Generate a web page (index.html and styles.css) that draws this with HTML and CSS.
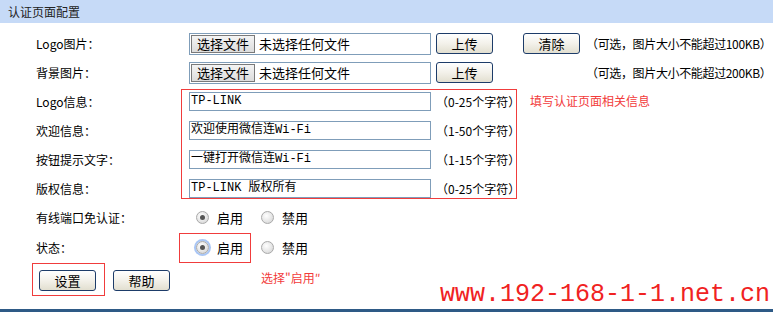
FILE: index.html
```html
<!DOCTYPE html>
<html lang="zh-CN">
<head>
<meta charset="utf-8">
<title>认证页面配置</title>
<link rel="stylesheet" href="styles.css">
</head>
<body>
<div class="page">
  <div class="header">认证页面配置</div>
  <div class="form">
    <div class="row">
      <div class="label">Logo图片：</div>
      <div class="file"><span class="file-btn">选择文件</span><span class="file-text">未选择任何文件</span></div>
      <button class="btn btn-upload">上传</button>
      <div class="slot"><button class="btn">清除</button></div>
      <div class="hint">（可选，图片大小不能超过100KB）</div>
    </div>
    <div class="row">
      <div class="label">背景图片：</div>
      <div class="file"><span class="file-btn">选择文件</span><span class="file-text">未选择任何文件</span></div>
      <button class="btn btn-upload">上传</button>
      <div class="slot"></div>
      <div class="hint">（可选，图片大小不能超过200KB）</div>
    </div>
    <div class="group">
      <div class="row">
        <div class="label">Logo信息：</div>
        <div class="txt">TP-LINK</div>
        <div class="note">（0-25个字符）</div>
      </div>
      <div class="row">
        <div class="label">欢迎信息：</div>
        <div class="txt">欢迎使用微信连Wi-Fi</div>
        <div class="note">（1-50个字符）</div>
      </div>
      <div class="row">
        <div class="label">按钮提示文字：</div>
        <div class="txt">一键打开微信连Wi-Fi</div>
        <div class="note">（1-15个字符）</div>
      </div>
      <div class="row">
        <div class="label">版权信息：</div>
        <div class="txt">TP-LINK 版权所有</div>
        <div class="note">（0-25个字符）</div>
      </div>
      <div class="redbox box-info"></div>
      <div class="tip tip-info">填写认证页面相关信息</div>
    </div>
    <div class="row">
      <div class="label">有线端口免认证：</div>
      <div class="radios">
        <span class="radio on"></span><span class="rlabel">启用</span>
        <span class="radio"></span><span class="rlabel">禁用</span>
      </div>
    </div>
    <div class="row row-status">
      <div class="label">状态：</div>
      <div class="radios">
        <span class="radio on focus"></span><span class="rlabel">启用</span>
        <span class="radio"></span><span class="rlabel">禁用</span>
      </div>
      <div class="redbox box-status"></div>
    </div>
    <div class="actions">
      <button class="btn btn-set">设置</button>
      <button class="btn btn-help">帮助</button>
      <div class="redbox box-set"></div>
      <div class="tip tip-status">选择"启用″</div>
    </div>
  </div>
  <div class="watermark">www.192-168-1-1.net.cn</div>
  <div class="footer-line"></div>
</div>
</body>
</html>
```
FILE: styles.css
```css
html, body {
  margin: 0;
  padding: 0;
  background: #fff;
}
body {
  font-family: "Noto Sans CJK SC", "Liberation Sans", sans-serif;
  font-size: 12px;
  color: #000;
}
.page {
  position: relative;
  width: 773px;
  height: 312px;
  overflow: hidden;
}
.header {
  height: 23px;
  line-height: 23px;
  background: #c6daf7;
  padding-left: 8px;
  font-size: 12px;
  color: #222;
}
.form {
  padding-top: 6px;
  padding-left: 36px;
}
.row {
  position: relative;
  display: flex;
  align-items: center;
  height: 29px;
}
.label {
  width: 153px;
  flex: none;
  font-size: 12px;
}
.file {
  width: 242px;
  height: 22px;
  flex: none;
  box-sizing: border-box;
  border: 1px solid #7f9db9;
  display: flex;
  align-items: center;
  background: #fff;
}
.file-btn {
  margin-left: 1px;
  height: 18px;
  box-sizing: border-box;
  border: 1px solid #7a7a7a;
  background: linear-gradient(#f4f4f4, #dcdcdc);
  padding: 0 5px;
  font-size: 13px;
  line-height: 16px;
  display: flex;
  align-items: center;
}
.file-text {
  margin-left: 4px;
  font-size: 13px;
}
.btn {
  width: 57px;
  height: 21px;
  flex: none;
  box-sizing: border-box;
  border: 1px solid #1d3c69;
  border-radius: 3px;
  background: linear-gradient(#ffffff 0%, #f3f1ea 50%, #e2dfd0 100%);
  font-family: "Noto Sans CJK SC", sans-serif;
  font-size: 13px;
  line-height: 17px;
  padding: 0;
  color: #000;
}
.btn-upload {
  margin-left: 5px;
}
.slot {
  width: 94px;
  flex: none;
  display: flex;
}
.slot .btn {
  margin-left: 30px;
}
.hint {
  font-size: 12px;
  white-space: nowrap;
  flex: none;
  margin-left: -1px;
  letter-spacing: -0.35px;
}
.txt {
  width: 242px;
  height: 19px;
  flex: none;
  box-sizing: border-box;
  border: 1px solid #7f9db9;
  font-family: "Liberation Mono", "Noto Sans CJK SC", monospace;
  font-size: 12px;
  line-height: 17px;
  padding-left: 1px;
  white-space: nowrap;
  overflow: hidden;
}
.note {
  margin-left: 5px;
  font-size: 12px;
  white-space: nowrap;
}
.group {
  position: relative;
}
.redbox {
  position: absolute;
  border: 1px solid #f03c3c;
  pointer-events: none;
}
.box-info {
  left: 145px;
  top: 2px;
  width: 334px;
  height: 108px;
}
.tip {
  position: absolute;
  color: #f23b3b;
  font-size: 12px;
  white-space: nowrap;
}
.tip-info {
  left: 494px;
  top: 5px;
}
.radios {
  display: flex;
  align-items: center;
  margin-left: 7px;
}
.radio {
  width: 11px;
  height: 11px;
  border-radius: 50%;
  border: 1px solid #a9a9a9;
  background: radial-gradient(circle at 40% 35%, #ffffff 0%, #e6e6e6 55%, #cfcfcf 100%);
  position: relative;
  flex: none;
}
.radio.on::after {
  content: "";
  position: absolute;
  left: 3px;
  top: 3px;
  width: 5px;
  height: 5px;
  border-radius: 50%;
  background: #555;
}
.radio.focus {
  box-shadow: 0 0 0 2px #a9c6f5;
}
.rlabel {
  margin-left: 8px;
  margin-right: 18px;
  font-size: 13px;
}
.row-status {
  height: 31px;
}
.box-status {
  left: 143px;
  top: 1px;
  width: 70px;
  height: 28px;
}
.actions {
  position: relative;
  display: flex;
  align-items: center;
  margin-top: 6px;
  padding-left: 3px;
  height: 22px;
}
.btn-help {
  margin-left: 17px;
}
.box-set {
  left: -4px;
  top: -6px;
  width: 71px;
  height: 31px;
}
.tip-status {
  left: 225px;
  top: 0px;
}
.watermark {
  position: absolute;
  left: 440px;
  top: 280px;
  font-family: "Liberation Mono", monospace;
  font-size: 25px;
  color: #f02222;
  white-space: nowrap;
}
.footer-line {
  position: absolute;
  left: 0;
  top: 309px;
  width: 773px;
  height: 3px;
  background: #2e5a86;
}
```
